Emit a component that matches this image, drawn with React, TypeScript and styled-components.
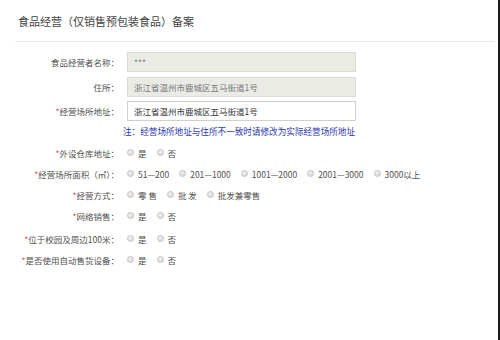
import styled, { createGlobalStyle } from "styled-components";

const GlobalStyle = createGlobalStyle`
  html, body {
    margin: 0;
    padding: 0;
    background: #ffffff;
  }
  body {
    font-family: "Noto Sans CJK SC", "Liberation Sans", sans-serif;
  }
`;

const Page = styled.div`
  width: 498px;
  height: 340px;
  border-right: 2px solid #1c1c1c;
  background: #ffffff;
  overflow: hidden;
`;

const Header = styled.div`
  height: 41px;
  margin: 0 4px 0 15px;
  padding-left: 3px;
  display: flex;
  align-items: center;
  border-bottom: 1px solid #e9e9e9;
  font-size: 11px;
  color: #444;
`;

const Form = styled.div`
  padding-top: 10px;
  display: flex;
  flex-direction: column;
`;

const Row = styled.div<{ $h: number; $mt?: number }>`
  display: grid;
  grid-template-columns: 119px 1fr;
  column-gap: 8px;
  align-items: center;
  height: ${(p) => p.$h}px;
  margin-top: ${(p) => p.$mt ?? 0}px;
`;

const Label = styled.div`
  text-align: right;
  font-size: 8.5px;
  color: #505050;
  white-space: nowrap;
`;

const Star = styled.span`
  color: #d9534f;
`;

const Input = styled.div<{ $disabled?: boolean }>`
  width: 229px;
  height: 20px;
  box-sizing: border-box;
  border: 1px solid ${(p) => (p.$disabled ? "#dcdcd6" : "#cfcfcf")};
  background: ${(p) => (p.$disabled ? "#ebebe6" : "#ffffff")};
  display: flex;
  align-items: center;
  padding-left: 6px;
  font-size: 8.5px;
  color: ${(p) => (p.$disabled ? "#777" : "#333")};
`;

const Note = styled.div`
  grid-column: 2;
  margin-left: -4px;
  font-size: 8.6px;
  color: #2b35b0;
  white-space: nowrap;
`;

const Options = styled.div`
  display: flex;
  align-items: center;
  gap: 10px;
`;

const Option = styled.label`
  display: flex;
  align-items: center;
  gap: 4px;
  font-size: 8.5px;
  color: #505050;
  white-space: nowrap;
`;

const Dot = styled.span`
  width: 7px;
  height: 7px;
  border-radius: 50%;
  box-sizing: border-box;
  border: 1px solid #c4c4c4;
  background: radial-gradient(circle at 40% 35%, #f4f4f4, #cfcfcf);
`;

type Field = { label: string; required?: boolean; options: string[] };

const radios: Field[] = [
  { label: "外设仓库地址：", required: true, options: ["是", "否"] },
  {
    label: "经营场所面积（㎡）：",
    required: true,
    options: ["51—200", "201—1000", "1001—2000", "2001—3000", "3000以上"],
  },
  { label: "经营方式：", required: true, options: ["零 售", "批 发", "批发兼零售"] },
  { label: "网络销售：", required: true, options: ["是", "否"] },
  { label: "位于校园及周边100米：", required: true, options: ["是", "否"] },
  { label: "是否使用自动售货设备：", required: true, options: ["是", "否"] },
];

export default function App() {
  return (
    <Page>
      <GlobalStyle />
      <Header>食品经营（仅销售预包装食品）备案</Header>
      <Form>
        <Row $h={20}>
          <Label>食品经营者名称：</Label>
          <Input $disabled>***</Input>
        </Row>
        <Row $h={20} $mt={5}>
          <Label>住所：</Label>
          <Input $disabled>浙江省温州市鹿城区五马街道1号</Input>
        </Row>
        <Row $h={20} $mt={4}>
          <Label>
            <Star>*</Star>经营场所地址：
          </Label>
          <Input>浙江省温州市鹿城区五马街道1号</Input>
        </Row>
        <Row $h={14} $mt={3}>
          <Note>注：经营场所地址与住所不一致时请修改为实际经营场所地址</Note>
        </Row>
        {radios.map((f, i) => (
          <Row key={f.label} $h={21} $mt={i === 0 ? 4 : i === 4 ? 2 : 0}>
            <Label>
              {f.required && <Star>*</Star>}
              {f.label}
            </Label>
            <Options>
              {f.options.map((o) => (
                <Option key={o}>
                  <Dot />
                  {o}
                </Option>
              ))}
            </Options>
          </Row>
        ))}
      </Form>
    </Page>
  );
}
